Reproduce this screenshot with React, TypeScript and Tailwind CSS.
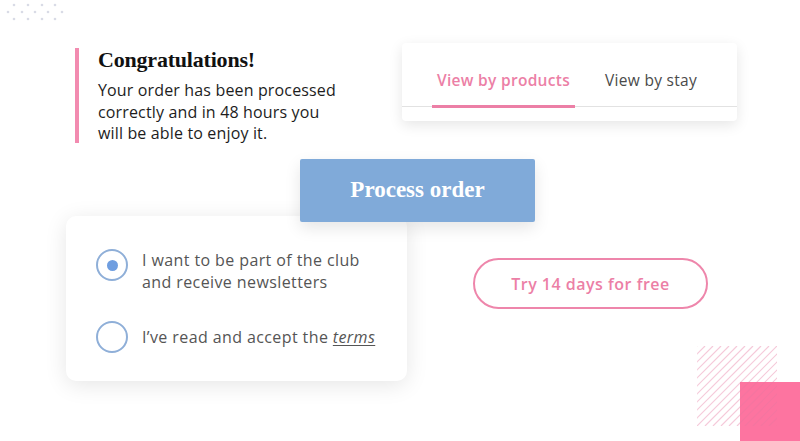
import React from 'react';

const serif = "font-['Liberation_Serif',serif]";
const sans = "font-['Open_Sans',sans-serif]";

const Dots = () => {
  const rows = [
    { y: 5, xs: [14, 28, 42, 55] },
    { y: 12, xs: [8, 22, 35, 48, 62] },
    { y: 19, xs: [14, 28, 42, 55] },
  ];
  return (
    <svg width="70" height="24" className="absolute left-0 top-0">
      {rows.map((r) =>
        r.xs.map((x) => <circle key={`${r.y}-${x}`} cx={x} cy={r.y} r="1.3" fill="#d9dbe6" />)
      )}
    </svg>
  );
};

const Hatch = () => (
  <svg width="104" height="96" className="absolute left-[697px] top-[346px]">
    <rect x="43" y="36" width="61" height="60" fill="#fd74a0" />
    <defs>
      <clipPath id="hc">
        <rect x="0" y="0" width="80" height="80" />
      </clipPath>
    </defs>
    <g clipPath="url(#hc)" stroke="#e7789f" strokeOpacity="0.4" strokeWidth="1.2">
      {Array.from({ length: 22 }).map((_, i) => {
        const o = i * 8 - 80;
        return <line key={i} x1={o} y1={80} x2={o + 80} y2={0} />;
      })}
    </g>
  </svg>
);

const Radio = ({ checked }: { checked?: boolean }) => (
  <div className="w-8 h-8 rounded-full border-2 border-[#8fafd8] flex items-center justify-center shrink-0">
    {checked && <div className="w-[11px] h-[11px] rounded-full bg-[#6f9ee0]" />}
  </div>
);

export default function App() {
  return (
    <div className="relative w-[800px] h-[441px] bg-white overflow-hidden">
      <Dots />

      {/* congratulations message */}
      <div className="absolute left-[75px] top-[48px] flex">
        <div className="w-1 h-[95px] bg-[#f28bb0]" />
        <div className="pl-[19px]">
          <h1 className={`${serif} text-[22px] font-bold text-[#111] leading-[24px] tracking-[-0.2px]`}>
            Congratulations!
          </h1>
          <p className={`${sans} mt-[8px] text-[16px] leading-[21.5px] tracking-[0.15px] text-[#1d1d1d] w-[245px]`}>
            Your order has been processed correctly and in 48 hours you will be able to enjoy it.
          </p>
        </div>
      </div>

      {/* tabs card */}
      <div className="absolute left-[402px] top-[43px] w-[335px] h-[78px] bg-white rounded-[4px] shadow-[0_4px_14px_rgba(0,0,0,0.10)]">
        <div className={`${sans} flex h-[64px] border-b border-[#e2e2e2] text-[15.5px] tracking-[0.3px]`}>
          <div className="ml-[30px] px-[5px] pt-[13px] flex items-center border-b-[3px] border-[#ec7fa6] -mb-[2px] text-[#ec7fa6] font-semibold">
            View by products
          </div>
          <div className="ml-[30px] pt-[13px] flex items-center text-[#4a4a4a]">View by stay</div>
        </div>
      </div>

      {/* checkbox card */}
      <div className="absolute left-[66px] top-[216px] w-[341px] h-[165px] bg-white rounded-[10px] shadow-[0_4px_22px_rgba(0,0,0,0.10)] pl-[30px] pt-[33px]">
        <div className="flex items-start gap-[14px]">
          <Radio checked />
          <p className={`${sans} text-[16px] leading-[22px] tracking-[0.4px] text-[#555]`}>
            I want to be part of the club
            <br />
            and receive newsletters
          </p>
        </div>
        <div className="flex items-center gap-[14px] mt-[28px]">
          <Radio />
          <p className={`${sans} text-[16px] tracking-[0.4px] text-[#555]`}>
            I’ve read and accept the <span className="italic underline underline-offset-2">terms</span>
          </p>
        </div>
      </div>

      {/* process button */}
      <div
        className={`${serif} absolute left-[300px] top-[159px] w-[235px] h-[63px] bg-[#80aad9] rounded-[2px] shadow-[0_6px_16px_rgba(0,0,0,0.10)] flex items-center justify-center text-white text-[23px] font-bold`}
      >
        Process order
      </div>

      {/* trial button */}
      <div
        className={`${sans} absolute left-[473px] top-[258px] w-[235px] h-[51px] rounded-full border-2 border-[#ee86ab] flex items-center justify-center text-[#ec7fa6] text-[16px] tracking-[0.5px] font-semibold`}
      >
        Try 14 days for free
      </div>

      <Hatch />
    </div>
  );
}
